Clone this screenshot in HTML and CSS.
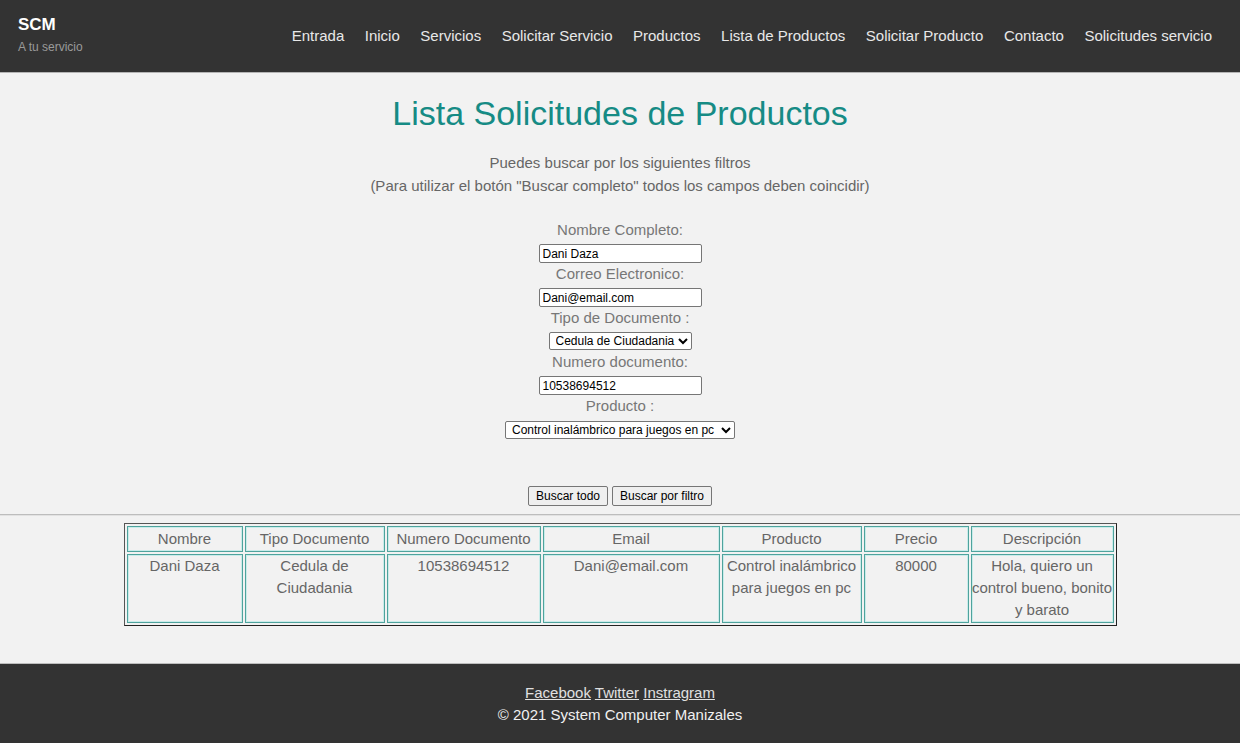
FILE: index.html
```html
<!DOCTYPE html>
<html lang="es">
<head>
<meta charset="utf-8">
<title>Lista Solicitudes de Productos</title>
<link rel="stylesheet" href="styles.css">
</head>
<body>
<header class="topbar">
  <div class="brand">
    <div class="brand-name">SCM</div>
    <div class="brand-tag">A tu servicio</div>
  </div>
  <nav class="nav">
    <a href="#">Entrada</a>
    <a href="#">Inicio</a>
    <a href="#">Servicios</a>
    <a href="#">Solicitar Servicio</a>
    <a href="#">Productos</a>
    <a href="#">Lista de Productos</a>
    <a href="#">Solicitar Producto</a>
    <a href="#">Contacto</a>
    <a href="#">Solicitudes servicio</a>
  </nav>
</header>

<main class="content">
  <h1 class="title">Lista Solicitudes de Productos</h1>
  <p class="intro">Puedes buscar por los siguientes filtros<br>(Para utilizar el botón "Buscar completo" todos los campos deben coincidir)</p>

  <form class="filters">
    <label class="field-label">Nombre Completo:</label>
    <input class="field-input" type="text" value="Dani Daza">
    <label class="field-label">Correo Electronico:</label>
    <input class="field-input" type="text" value="Dani@email.com">
    <label class="field-label">Tipo de Documento :</label>
    <select class="field-select select-doc"><option>Cedula de Ciudadania</option></select>
    <label class="field-label">Numero documento:</label>
    <input class="field-input" type="text" value="10538694512">
    <label class="field-label">Producto :</label>
    <select class="field-select select-prod"><option>Control inalámbrico para juegos en pc</option></select>

    <div class="actions">
      <button type="button" class="btn">Buscar todo</button>
      <button type="button" class="btn">Buscar por filtro</button>
    </div>
  </form>

  <hr class="divider">

  <table class="results">
    <thead>
      <tr>
        <th class="c-nombre">Nombre</th>
        <th class="c-tipo">Tipo Documento</th>
        <th class="c-num">Numero Documento</th>
        <th class="c-email">Email</th>
        <th class="c-prod">Producto</th>
        <th class="c-precio">Precio</th>
        <th class="c-desc">Descripción</th>
      </tr>
    </thead>
    <tbody>
      <tr>
        <td>Dani Daza</td>
        <td>Cedula de Ciudadania</td>
        <td>10538694512</td>
        <td>Dani@email.com</td>
        <td>Control inalámbrico para juegos en pc</td>
        <td>80000</td>
        <td>Hola, quiero un control bueno, bonito y barato</td>
      </tr>
    </tbody>
  </table>
</main>

<footer class="footer">
  <div class="social">
    <a href="#">Facebook</a> <a href="#">Twitter</a> <a href="#">Instragram</a>
  </div>
  <div class="copy">© 2021 System Computer Manizales</div>
</footer>
</body>
</html>
```

FILE: styles.css
```css
* { box-sizing: border-box; }

html, body {
  margin: 0;
  padding: 0;
}

body {
  font-family: "Liberation Sans", Arial, sans-serif;
  background: #f2f2f2;
  color: #666;
}

.topbar {
  height: 73px;
  background: #333;
  border-bottom: 1px solid #b5b5b5;
  display: flex;
  align-items: center;
  justify-content: space-between;
  padding: 0 28px 0 18px;
}

.brand {
  display: flex;
  flex-direction: column;
  margin-top: -2px;
}

.brand-name {
  color: #fff;
  font-weight: bold;
  font-size: 17px;
  line-height: 20px;
}

.brand-tag {
  color: #9a9a9a;
  font-size: 12px;
  line-height: 16px;
  margin-top: 4px;
}

.nav {
  display: flex;
  gap: 20.5px;
  margin-top: -1px;
}

.nav a {
  color: #e8e8e8;
  text-decoration: none;
  font-size: 15px;
  line-height: 20px;
}

.content {
  padding: 20px 0 37px;
  text-align: center;
}

.title {
  margin: 0;
  font-size: 34px;
  font-weight: normal;
  line-height: 40px;
  color: #168b85;
}

.intro {
  margin: 18px 0 0;
  font-size: 15px;
  line-height: 23px;
  color: #666;
}

.filters {
  margin-top: 22px;
  display: flex;
  flex-direction: column;
  align-items: center;
}

.field-label {
  display: block;
  font-size: 15px;
  line-height: 22px;
  color: #777;
}

.field-input {
  display: block;
  margin-top: 3px;
  width: 163px;
  height: 19px;
  padding: 0 3px;
  border: 1px solid #767676;
  border-radius: 2px;
  background: #fff;
  font-family: "Liberation Sans", Arial, sans-serif;
  font-size: 12px;
  color: #000;
}

.field-select {
  display: block;
  margin-top: 3px;
  height: 18px;
  padding: 0 0 0 2px;
  border: 1px solid #767676;
  border-radius: 2px;
  background: #fff;
  font-family: "Liberation Sans", Arial, sans-serif;
  font-size: 12px;
  color: #000;
}

.select-doc { width: 143px; margin-bottom: 1px; }
.select-prod { width: 230px; margin-top: 4px; }

.actions {
  margin-top: 47px;
  display: flex;
  gap: 4px;
}

.btn {
  height: 20px;
  padding: 0 7px;
  border: 1px solid #767676;
  border-radius: 2px;
  background: #efefef;
  font-family: "Liberation Sans", Arial, sans-serif;
  font-size: 12px;
  color: #000;
}

.divider {
  margin: 8px 0 0;
  border: 0;
  border-top: 1px solid #bdbdbd;
  border-bottom: 1px solid #e2e2e2;
  height: 0;
}

.results {
  margin: 7px auto 0;
  width: 991px;
  table-layout: fixed;
  border-collapse: separate;
  border-spacing: 2px;
  border: 1px solid #222;
  border-top-color: #555;
  border-left-color: #555;
}

.results th,
.results td {
  border: 1px solid #4fa39d;
  box-shadow: inset 0 0 0 1px #c9ecea;
  padding: 0 0 1px;
  font-size: 15px;
  font-weight: normal;
  line-height: 22px;
  color: #666;
  text-align: center;
  vertical-align: top;
}

.results th { padding: 1px 0 1px; }

.c-nombre { width: 116px; }
.c-tipo { width: 140px; }
.c-num { width: 154px; }
.c-email { width: 177px; }
.c-prod { width: 140px; }
.c-precio { width: 105px; }
.c-desc { width: 143px; }

.footer {
  height: 81px;
  background: #333;
  border-top: 1px solid #bdbdbd;
  padding-top: 18px;
  text-align: center;
  font-size: 15px;
  line-height: 22px;
}

.social a {
  color: #e0e0e0;
  text-decoration: underline;
}

.copy {
  color: #f0f0f0;
}
```
